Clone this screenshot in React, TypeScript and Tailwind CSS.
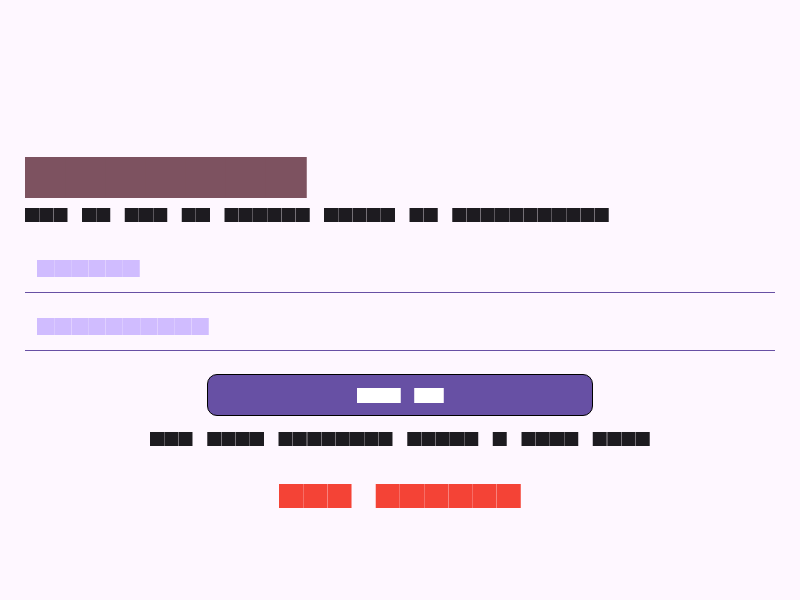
import React from "react";

type BlockTextProps = { text: string; className: string };

/* Evenly pitched block lettering: one column per character. */
function BlockText({ text, className }: BlockTextProps) {
  return (
    <span className={`grid auto-cols-fr grid-flow-col whitespace-pre will-change-transform ${className}`}>
      {Array.from(text).map((char, i) => (
        <span key={i} className="min-w-0">
          {char}
        </span>
      ))}
    </span>
  );
}

type FieldProps = {
  id: string;
  type: string;
  label: string;
  labelWidth: string;
};

function Field({ id, type, label, labelWidth }: FieldProps) {
  return (
    <div className="relative h-[58px] border-b border-[#6750a4]">
      <input
        id={id}
        type={type}
        className="h-full w-full bg-transparent px-3 text-[17px] text-[#1d1b20] outline-none"
      />
      <label
        htmlFor={id}
        className="pointer-events-none absolute left-3 top-6 text-[17px] leading-[17px] text-[#d0bcff]"
      >
        <BlockText text={label} className={labelWidth} />
      </label>
    </div>
  );
}

export default function App() {
  return (
    <main className="flex min-h-screen flex-col justify-center bg-[#fef7ff] px-[25px] pt-[62px] font-['Noto_Sans_CJK_SC',sans-serif] text-sm leading-[15px] text-[#1d1b20]">
      <h1 className="text-[41px] leading-[41px] text-[#7d5260]">
        <BlockText text="███████" className="w-[281px]" />
      </h1>
      <p className="mt-[11px]">
        <BlockText text="███ ██ ███ ██ ██████ █████ ██ ███████████" className="w-[584px]" />
      </p>
      <form className="mt-[13px]" onSubmit={(e) => e.preventDefault()}>
        <Field id="email" type="email" label="██████" labelWidth="w-[103px]" />
        <Field id="password" type="password" label="██████████" labelWidth="w-[172px]" />
        <button
          type="submit"
          className="mx-auto mt-[23px] flex h-[42px] w-full max-w-[386px] items-center justify-center rounded-[10px] border border-black bg-[#6750a4] pb-0.5 text-[15px] text-white"
        >
          <BlockText text="███ ██" className="w-[86px]" />
        </button>
      </form>
      <p className="mt-[15px] flex justify-center">
        <BlockText text="███ ████ ████████ █████ █ ████ ████" className="w-[500px]" />
      </p>
      <p className="mt-[37px] flex justify-center text-2xl leading-6 text-[#f44336]">
        <BlockText text="███ ██████" className="w-[242px]" />
      </p>
    </main>
  );
}
